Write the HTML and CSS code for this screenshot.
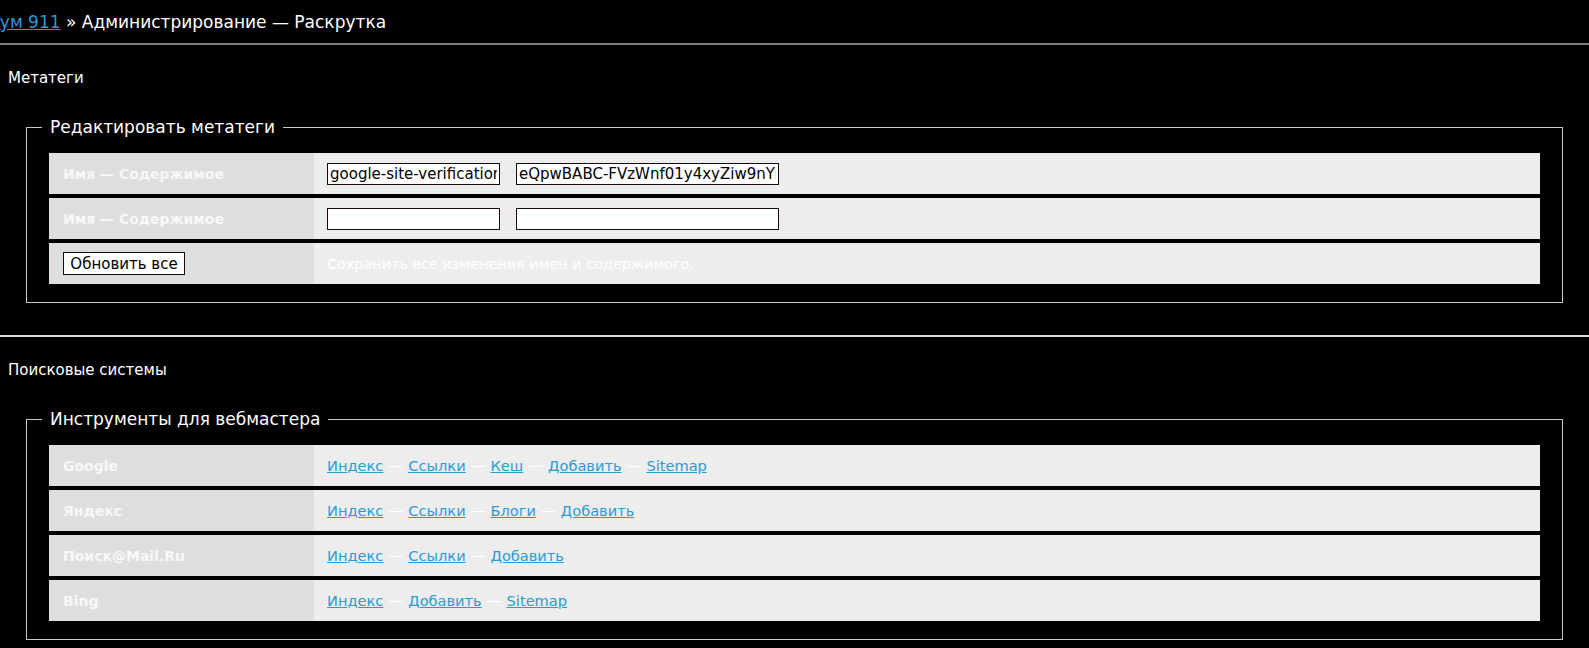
FILE: index.html
```html
<!DOCTYPE html>
<html lang="ru">
<head>
  <meta charset="UTF-8">
  <title>Администрирование — Раскрутка</title>
  <link rel="stylesheet" href="styles.css">
</head>
<body>
  <div class="crumbs">
    <span class="crumbs-inner"><a href="#">Форум 911</a> » Администрирование — Раскрутка</span>
  </div>

  <div class="section">
    <div class="section-title">Метатеги</div>
    <fieldset>
      <legend>Редактировать метатеги</legend>
      <div class="rows">
        <div class="row">
          <div class="label">Имя — Содержимое</div>
          <div class="value">
            <input type="text" class="name-input" value="google-site-verification">
            <input type="text" class="content-input" value="eQpwBABC-FVzWnf01y4xyZiw9nYk">
          </div>
        </div>
        <div class="row">
          <div class="label">Имя — Содержимое</div>
          <div class="value">
            <input type="text" class="name-input">
            <input type="text" class="content-input">
          </div>
        </div>
        <div class="row">
          <div class="label"><button type="button">Обновить все</button></div>
          <div class="value hint">Сохранить все изменения имен и содержимого.</div>
        </div>
      </div>
    </fieldset>
  </div>

  <div class="section">
    <div class="section-title">Поисковые системы</div>
    <fieldset>
      <legend>Инструменты для вебмастера</legend>
      <div class="rows">
        <div class="row">
          <div class="label">Google</div>
          <div class="value links">
            <a href="#">Индекс</a> — <a href="#">Ссылки</a> — <a href="#">Кеш</a> — <a href="#">Добавить</a> — <a href="#">Sitemap</a>
          </div>
        </div>
        <div class="row">
          <div class="label">Яндекс</div>
          <div class="value links">
            <a href="#">Индекс</a> — <a href="#">Ссылки</a> — <a href="#">Блоги</a> — <a href="#">Добавить</a>
          </div>
        </div>
        <div class="row">
          <div class="label">Поиск@Mail.Ru</div>
          <div class="value links">
            <a href="#">Индекс</a> — <a href="#">Ссылки</a> — <a href="#">Добавить</a>
          </div>
        </div>
        <div class="row">
          <div class="label">Bing</div>
          <div class="value links">
            <a href="#">Индекс</a> — <a href="#">Добавить</a> — <a href="#">Sitemap</a>
          </div>
        </div>
      </div>
    </fieldset>
  </div>
</body>
</html>
```

FILE: styles.css
```css
body {
  margin: 0;
  background: #000;
  color: #fff;
  font-family: "DejaVu Sans", Verdana, sans-serif;
  font-size: 14px;
  overflow: hidden;
}

a {
  color: #2b9bd8;
}

.crumbs {
  height: 43px;
  line-height: 44px;
  font-size: 17px;
  border-bottom: 2px solid #808080;
  white-space: nowrap;
  overflow: hidden;
}

.crumbs-inner {
  display: inline-block;
  margin-left: -36px;
}

.section + .section {
  border-top: 2px solid #e0e0e0;
  margin-top: 32px;
}

.section-title {
  padding: 23px 8px 0;
  line-height: 20px;
  font-size: 15px;
}

fieldset {
  margin: 29px 26px 0;
  padding: 16px 22px 18px;
  border: 1px solid #c8c8c8;
}

legend {
  padding: 0 8px;
  margin-left: -7px;
  font-size: 17px;
  line-height: 20px;
}

.rows {
  display: grid;
  gap: 4px;
}

.row {
  display: grid;
  grid-template-columns: 265px 1fr;
  height: 41px;
}

.label {
  background: #dddfde;
  color: #f8f8f8;
  font-weight: bold;
  font-size: 14px;
  padding-left: 14px;
  display: flex;
  align-items: center;
}

.value {
  background: #ededed;
  padding-left: 13px;
  display: flex;
  align-items: center;
  gap: 16px;
}

.value input {
  height: 22px;
  box-sizing: border-box;
  border: 1px solid #1a0a0a;
  background: #fff;
  color: #000;
  font-family: "DejaVu Sans", Verdana, sans-serif;
  font-size: 15px;
  padding: 0 2px;
  margin: 0;
}

.name-input {
  width: 173px;
}

.content-input {
  width: 263px;
}

button {
  height: 23px;
  width: 122px;
  background: #fff;
  color: #000;
  border: 1px solid #1a0a0a;
  font-family: "DejaVu Sans", Verdana, sans-serif;
  font-size: 15px;
  padding: 0;
}

.hint {
  color: #fff;
  font-size: 14.4px;
}

.links {
  display: block;
  line-height: 41px;
  color: #fff;
  font-size: 14.6px;
  word-spacing: 0.5px;
}
```
